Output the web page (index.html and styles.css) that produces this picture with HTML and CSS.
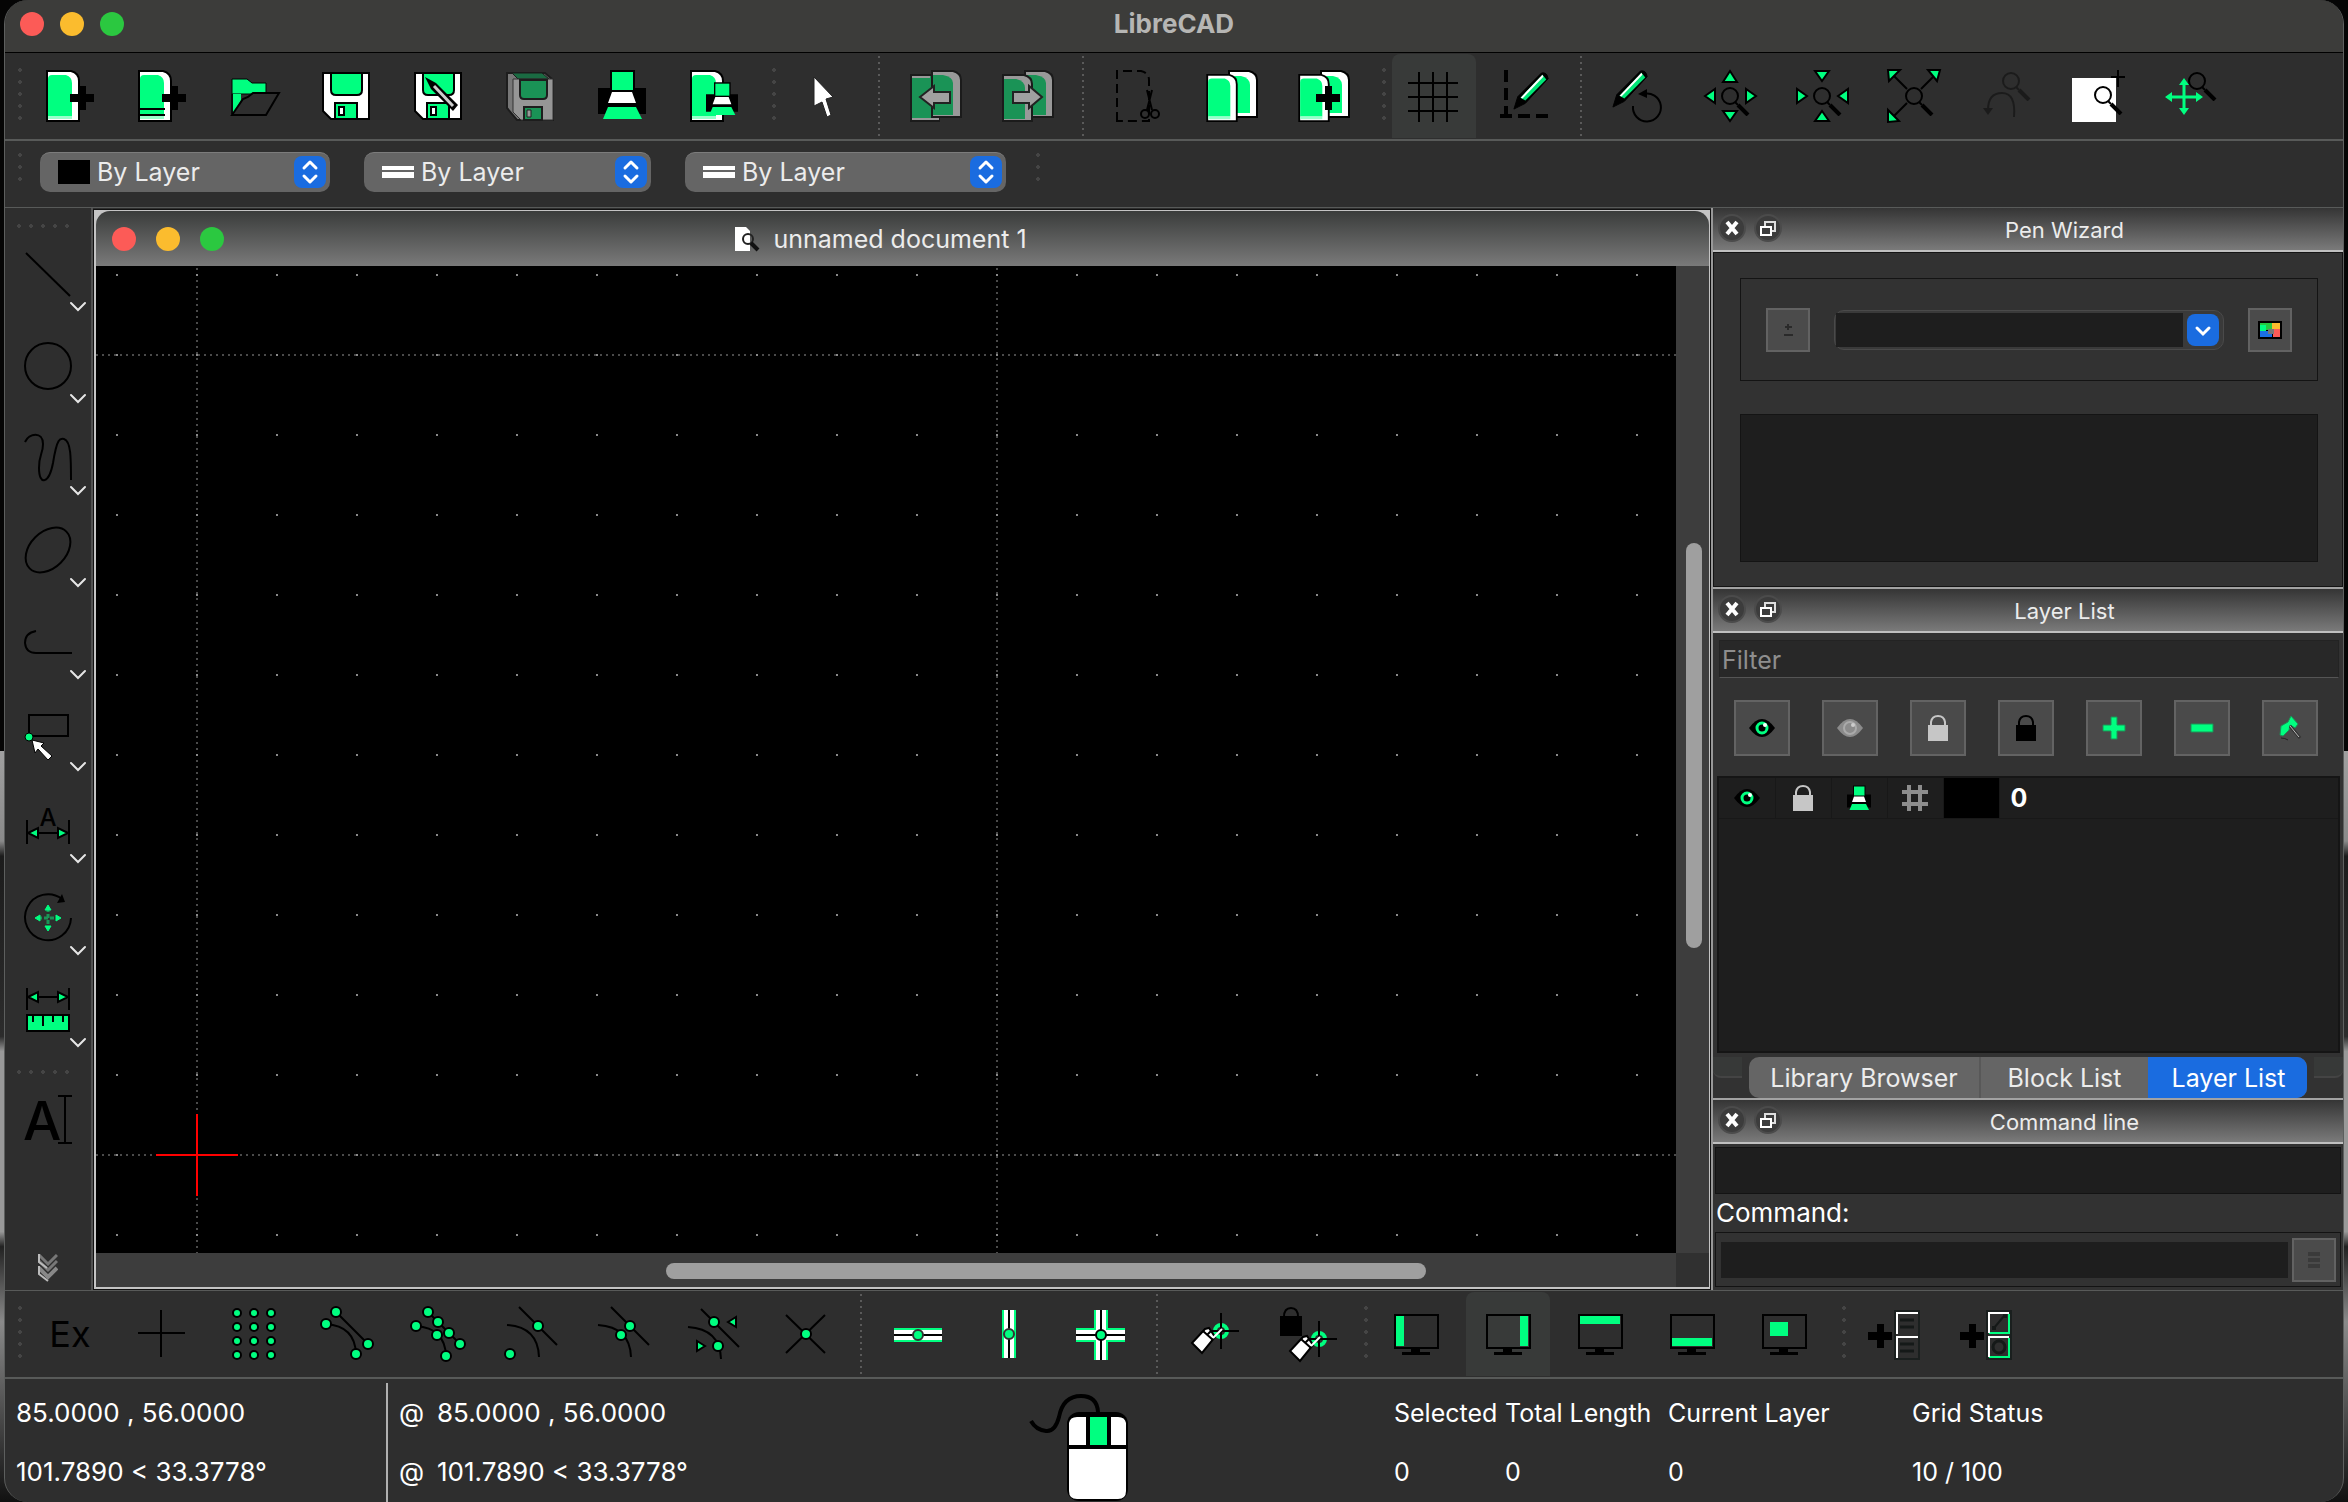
FILE: index.html
```html
<!DOCTYPE html>
<html lang="en">
<head>
<meta charset="utf-8">
<title>LibreCAD</title>
<link rel="stylesheet" href="styles.css">
</head>
<body>
<svg class="defs" aria-hidden="true">
  <defs>
    <symbol id="doc" viewBox="0 0 34 52"><path d="M1 1h24q8 2 8 10v40H1z" fill="#fff" stroke="#000" stroke-width="2"/><path d="M2 9q0-4 4-4h14q6 2 6 8v33H2z" fill="#00ff80"/><path d="M2 46h24v3H2z" fill="#9fc"/></symbol>
    <symbol id="doc-back" viewBox="0 0 30 48"><path d="M1 1h20q8 2 8 9v37H1z" fill="#fff" stroke="#000" stroke-width="2"/><path d="M2 6h11q9 2 9 9v28H2z" fill="#00ff80"/></symbol>
    <symbol id="plus" viewBox="0 0 24 24"><path d="M9 0h7v8h8v8h-8v8H9v-8H0V8h9z"/></symbol>
    <symbol id="printer" viewBox="0 0 48 50"><path d="M0 18h12V0h25v18h11v26H0z"/><path d="M14 2h21v18H14z" fill="#00ff80"/><path d="M14 22h20l4 11H10z" fill="#fff"/><path d="M10 37h28l6 12H5z" fill="#00ff80"/></symbol>
    <symbol id="floppy" viewBox="0 0 48 48"><path d="M1 1h46v46H9l-8-8z" fill="#fff" stroke="#000" stroke-width="2"/><path d="M9 1h31v17q0 5-5 5H14q-5 0-5-5z" fill="#00ff80" stroke="#000" stroke-width="2"/><path d="M13 47V31h22v16z" fill="#00ff80" stroke="#000" stroke-width="2"/><path d="M17 35h5v8h-5z" fill="#fff" stroke="#000" stroke-width="2"/></symbol>
    <symbol id="lens" viewBox="0 0 30 30"><circle cx="9" cy="10" r="8" fill="none" stroke="#000" stroke-width="2"/><path d="M14 16l3 3" stroke="#000" stroke-width="2"/><path d="M17 19l10 10" stroke="#000" stroke-width="4"/></symbol>
    <symbol id="pencil" viewBox="0 0 40 40"><path d="M1 39l4-13L30 1q6-1 7 6L13 33z" stroke="#000" stroke-width="1"/><path d="M8 27L31 3l4 5-22 22z" fill="#00e676"/><path d="M8 27L31 3l1 2L10 28z" fill="#fff"/></symbol>
    <symbol id="monitor" viewBox="0 0 46 42"><path d="M1 1h43v33H1z" fill="none" stroke="#000" stroke-width="2"/><path d="M17 34h9v4h10v3H8v-3h9z"/></symbol>
    <symbol id="eye" viewBox="0 0 26 20"><path d="M0 10Q13-8 26 10 13 28 0 10z"/><circle cx="13" cy="10" r="5" fill="none" stroke="#00ff80" stroke-width="3"/><circle cx="16" cy="7" r="2" fill="#fff"/></symbol>
    <symbol id="eye-off" viewBox="0 0 26 20"><path d="M0 10Q13-8 26 10 13 28 0 10z" fill="#8b8b8b"/><circle cx="13" cy="10" r="6" fill="none" stroke="#aaa" stroke-width="2"/><circle cx="16" cy="7" r="2" fill="#ccc"/></symbol>
    <symbol id="lock" viewBox="0 0 22 28"><path d="M4 12V8q1-6 7-6t7 6v4" fill="none" stroke="currentColor" stroke-width="2"/><path d="M1 11h20v16H1z" fill="currentColor"/></symbol>
    <symbol id="crosshair" viewBox="0 0 36 36"><circle cx="18" cy="18" r="6" fill="none" stroke="#00ff80" stroke-width="4"/><path d="M18 0v36M0 18h36" stroke="#000" stroke-width="2"/></symbol>
    <symbol id="brush" viewBox="0 0 36 32"><path d="M2 20L15 6l4-1 6 9-13 16z" fill="#fff" stroke="#000" stroke-width="2"/><path d="M13 8l10 9M17 12l4-4" fill="none" stroke="#000" stroke-width="2"/><path d="M23 15l9-9" fill="none" stroke="#fff" stroke-width="2"/></symbol>
    <symbol id="close" viewBox="0 0 28 28"><circle cx="14" cy="14" r="13" fill="#3c3c3c" stroke="#4b4b4b" stroke-width="2"/><path d="M9 8l10 12M19 8L9 20" stroke="#fff" stroke-width="4"/></symbol>
    <symbol id="float" viewBox="0 0 28 28"><circle cx="14" cy="14" r="13" fill="#3c3c3c" stroke="#4b4b4b" stroke-width="2"/><path d="M11 12V8h10v9h-3" fill="none" stroke="#ddd" stroke-width="2"/><path d="M7 13h10v8H7z" fill="#3c3c3c" stroke="#fff" stroke-width="2"/></symbol>
    <symbol id="updown" viewBox="0 0 32 32"><path d="M10 12l6-6 6 6M10 20l6 6 6-6" fill="none" stroke="#fff" stroke-width="3" stroke-linecap="round" stroke-linejoin="round"/></symbol>
    <symbol id="chev" viewBox="0 0 18 12"><path d="M2 2l7 7 7-7" fill="none" stroke="#e6e6e6" stroke-width="2" stroke-linecap="round"/></symbol>
  </defs>
</svg>

<div class="window">
  <header class="titlebar">
    <div class="lights"><button class="light red" aria-label="Close"></button><button class="light yellow" aria-label="Minimize"></button><button class="light green" aria-label="Zoom"></button></div>
    <h1>LibreCAD</h1>
  </header>

  <div class="toolbar" role="toolbar" aria-label="File and view">
    <span class="handle"></span>
    <div class="group">
      <button class="tool" aria-label="New"><svg viewBox="0 0 56 56"><use href="#doc" x="4" y="2" width="34" height="52"/><use href="#plus" x="28" y="18" width="24" height="24"/></svg></button>
      <button class="tool" aria-label="New from template"><svg viewBox="0 0 56 56"><use href="#doc" x="4" y="2" width="34" height="52"/><path d="M4 41h27M4 47h27" stroke="#000" stroke-width="2"/><use href="#plus" x="28" y="18" width="24" height="24"/></svg></button>
      <button class="tool" aria-label="Open"><svg viewBox="0 0 56 56"><path d="M6 46V11h15l5 4h14v11H6z" fill="#00ff80" stroke="#000"/><path d="M7 46V26h8v6z" fill="#00ff80"/><path d="M6 47L17 31l5-2 5-4h26L40 47z" fill="#2e2e2e" stroke="#000" stroke-width="2"/></svg></button>
      <button class="tool" aria-label="Save"><svg viewBox="0 0 56 56"><use href="#floppy" x="4" y="4" width="48" height="48"/></svg></button>
      <button class="tool" aria-label="Save as"><svg viewBox="0 0 56 56"><use href="#floppy" x="4" y="4" width="48" height="48"/><path d="M15 9l11 6 22 22-5 6-22-22z"/><path d="M24 18l19 20" stroke="#ccc" stroke-width="3"/></svg></button>
      <button class="tool" aria-label="Save all" disabled><svg viewBox="0 0 56 56"><path d="M5 5h38l8 7v40H15L5 40z" fill="#777" stroke="#1d1d1d" stroke-width="2"/><path d="M10 5h30l7 6H16z" fill="#1a6b42" stroke="#1d1d1d"/><path d="M11 11h40v41H19l-8-8z" fill="#969696" stroke="#333"/><path d="M18 12h27v15q0 4-4 4H22q-4 0-4-4z" fill="#1a9356" stroke="#1d1d1d" stroke-width="2"/><path d="M22 52V39h18v13z" fill="#1a9356" stroke="#1d1d1d" stroke-width="2"/><path d="M25 42h4v7h-4z" fill="#999" stroke="#222"/></svg></button>
      <button class="tool" aria-label="Print"><svg viewBox="0 0 56 56"><use href="#printer" x="4" y="2" width="48" height="50"/></svg></button>
      <button class="tool" aria-label="Print preview"><svg viewBox="0 0 56 56"><use href="#doc" x="4" y="2" width="34" height="52"/><use href="#printer" x="20" y="14" width="32" height="34"/></svg></button>
    </div>
    <span class="handle"></span>
    <button class="tool" aria-label="Select"><svg viewBox="0 0 56 56"><path d="M18 9l19 20-7 2 5 16-4 2-5-15-8 4z" fill="#fff" stroke="#222"/></svg></button>
    <span class="sep"></span>
    <div class="group">
      <button class="tool" aria-label="Undo" disabled><svg viewBox="0 0 56 56"><path d="M3 7h28v46H3z" fill="#1a9356" stroke="#1b1b1b" stroke-width="2"/><path d="M4 9h18M4 51h27" stroke="#999" stroke-width="2"/><path d="M24 3h21q8 2 8 9v37H24z" fill="#999" stroke="#1b1b1b" stroke-width="2"/><path d="M25 7h10q10 2 10 8v32H25z" fill="#1a9356"/><path d="M12 29l14-11v6h16v11H26v5z" fill="#a0a0a0" stroke="#222" stroke-width="2"/></svg></button>
      <button class="tool" aria-label="Redo" disabled><svg viewBox="0 0 56 56"><path d="M25 3h20q8 2 8 9v37H25z" fill="#999" stroke="#1b1b1b" stroke-width="2"/><path d="M26 7h10q10 2 10 8v32H26z" fill="#1a9356"/><path d="M3 7h21q8 2 8 9v37H3z" fill="#999" stroke="#1b1b1b" stroke-width="2"/><path d="M4 11h12q9 2 9 9v31H4z" fill="#1a9356"/><path d="M42 29L29 18v6H13v11h16v5z" fill="#a0a0a0" stroke="#222" stroke-width="2"/></svg></button>
    </div>
    <span class="sep"></span>
    <div class="group">
      <button class="tool" aria-label="Cut"><svg viewBox="0 0 56 56" fill="none" stroke="#000" stroke-width="2"><path d="M5 53V3h24q8 2 8 9v41z" stroke-dasharray="9 5"/><path d="M35 22l5 20M40 22l-5 20"/><circle cx="33" cy="46" r="4"/><circle cx="43" cy="46" r="4"/></svg></button>
      <button class="tool" aria-label="Copy"><svg viewBox="0 0 56 56"><use href="#doc-back" x="24" y="2" width="30" height="48"/><use href="#doc" x="2" y="6" width="32" height="48"/></svg></button>
      <button class="tool" aria-label="Paste"><svg viewBox="0 0 56 56"><use href="#doc-back" x="24" y="2" width="30" height="48"/><use href="#doc" x="2" y="6" width="32" height="48"/><use href="#plus" x="20" y="18" width="24" height="24"/></svg></button>
    </div>
    <span class="handle"></span>
    <div class="group">
      <button class="tool active" aria-label="Grid" aria-pressed="true"><svg viewBox="0 0 56 56"><path d="M13 4v50M27 4v50M41 4v50M2 15h50M2 29h50M2 43h50" stroke="#000" stroke-width="2"/></svg></button>
      <button class="tool" aria-label="Draft"><svg viewBox="0 0 56 56"><path d="M8 2v52" stroke="#000" stroke-width="4" stroke-dasharray="12 6"/><path d="M2 48h52" stroke="#000" stroke-width="4" stroke-dasharray="12 6"/><use href="#pencil" x="15" y="4" width="38" height="38"/></svg></button>
    </div>
    <span class="sep"></span>
    <div class="group">
      <button class="tool" aria-label="Redraw"><svg viewBox="0 0 56 56"><use href="#pencil" x="2" y="2" width="38" height="38"/><path d="M23 38a14 14 0 1 0 10-12" fill="none" stroke="#000" stroke-width="2"/><path d="M28 26l9-5v9z"/></svg></button>
      <button class="tool" aria-label="Zoom in"><svg viewBox="0 0 56 56"><use href="#lens" x="19" y="18" width="30" height="30"/><path d="M28 3l7 11H21zM28 53l7-10H21zM3 28l10-7v14zM54 28l-10-7v14z" fill="#00ff80" stroke="#000" stroke-width="2"/></svg></button>
      <button class="tool" aria-label="Zoom out"><svg viewBox="0 0 56 56"><use href="#lens" x="19" y="18" width="30" height="30"/><path d="M28 13l7-10H21zM28 43l7 10H21zM13 28L3 21v14zM44 28l10-7v14z" fill="#00ff80" stroke="#000" stroke-width="2"/></svg></button>
      <button class="tool" aria-label="Auto zoom"><svg viewBox="0 0 56 56"><use href="#lens" x="19" y="18" width="30" height="30"/><path d="M6 6l15 15M50 6L35 21M6 50l15-15" stroke="#000" stroke-width="2"/><path d="M2 2h12L3 13zM54 2H42l9 11zM2 54V42l11 11z" fill="#00ff80" stroke="#000" stroke-width="2"/></svg></button>
      <button class="tool" aria-label="Previous view" disabled><svg class="dim" viewBox="0 0 56 56"><use href="#lens" x="24" y="3" width="30" height="30"/><path d="M10 42q0-17 14-17t12 24" fill="none" stroke="#000" stroke-width="2"/><path d="M5 40h10l-5 7z"/></svg></button>
      <button class="tool" aria-label="Window zoom"><svg viewBox="0 0 56 56"><path d="M2 10h44v44H2z" fill="#fff"/><path d="M48 2v17M41 9h14" stroke="#000" stroke-width="2"/><use href="#lens" x="24" y="17" width="30" height="30"/></svg></button>
      <button class="tool" aria-label="Zoom panning"><svg viewBox="0 0 56 56"><use href="#lens" x="26" y="3" width="30" height="30"/><path d="M22 14v30M7 29h30" stroke="#00ff80" stroke-width="3"/><path d="M22 10l5 7H17zM22 47l5-7H17zM3 29l7-5v10zM41 29l-7-5v10z" fill="#00ff80"/></svg></button>
    </div>
  </div>

  <div class="toolbar pens" role="toolbar" aria-label="Pen">
    <span class="handle"></span>
    <label class="combo"><span class="swatch black"></span><select aria-label="Color"><option>By Layer</option></select><svg class="stepper" viewBox="0 0 32 32"><use href="#updown"/></svg></label>
    <label class="combo"><span class="swatch lines"></span><select aria-label="Line width"><option>By Layer</option></select><svg class="stepper" viewBox="0 0 32 32"><use href="#updown"/></svg></label>
    <label class="combo wide"><span class="swatch lines"></span><select aria-label="Line type"><option>By Layer</option></select><svg class="stepper" viewBox="0 0 32 32"><use href="#updown"/></svg></label>
    <span class="handle last"></span>
  </div>

  <main class="workspace">
    <div class="palette" role="toolbar" aria-label="Drawing tools">
      <span class="handle-h"></span>
      <div class="stack">
        <button class="tool" aria-label="Line"><svg viewBox="0 0 56 56"><path d="M6 7l44 43" stroke="#000" stroke-width="2"/></svg><svg class="more"><use href="#chev"/></svg></button>
        <button class="tool" aria-label="Circle"><svg viewBox="0 0 56 56"><circle cx="28" cy="28" r="23" fill="none" stroke="#000" stroke-width="2"/></svg><svg class="more"><use href="#chev"/></svg></button>
        <button class="tool" aria-label="Curve"><svg viewBox="0 0 56 56"><path d="M5 12C9 3 23 1 23 14C23 24 19 24 19 38C19 56 29 54 33 33C37 8 40 8 44 9C51 11 51 28 51 50" fill="none" stroke="#000" stroke-width="2"/></svg><svg class="more"><use href="#chev"/></svg></button>
        <button class="tool" aria-label="Ellipse"><svg viewBox="0 0 56 56"><ellipse cx="28" cy="28" rx="26" ry="18" transform="rotate(-45 28 28)" fill="none" stroke="#000" stroke-width="2"/></svg><svg class="more"><use href="#chev"/></svg></button>
        <button class="tool" aria-label="Polyline"><svg viewBox="0 0 56 56"><path d="M16 17q-11 2-11 12 1 10 11 10h36" fill="none" stroke="#000" stroke-width="2"/></svg><svg class="more"><use href="#chev"/></svg></button>
        <button class="tool" aria-label="Select"><svg viewBox="0 0 56 56"><path d="M9 9h39v21H9z" fill="none" stroke="#000" stroke-width="2"/><circle cx="9" cy="31" r="4" fill="#00ff80" stroke="#000"/><path d="M12 34l12 3-3 3 11 10-4 4-10-11-3 4z" fill="#fff" stroke="#000"/></svg><svg class="more"><use href="#chev"/></svg></button>
        <button class="tool" aria-label="Dimension"><svg viewBox="0 0 56 56"><text x="28" y="28" text-anchor="middle" class="glyph small">A</text><path d="M7 22v24M49 22v24M7 35h42" stroke="#000" stroke-width="2"/><path d="M8 35l10-5v10zM48 35l-10-5v10z" fill="#00ff80" stroke="#000" stroke-width="2"/></svg><svg class="more"><use href="#chev"/></svg></button>
        <button class="tool" aria-label="Modify"><svg viewBox="0 0 56 56"><path d="M42 9A23 23 0 1 0 51 28" fill="none" stroke="#000" stroke-width="2"/><path d="M42 4l3 8-8 1z"/><path d="M28 18v20M18 28h20" stroke="#1a9356" stroke-width="3" stroke-dasharray="4 2"/><path d="M25 20l3-5 3 5zM25 36l3 5 3-5zM20 25l-5 3 5 3zM36 25l5 3-5 3z" fill="#00ff80" stroke="#00ff80"/></svg><svg class="more"><use href="#chev"/></svg></button>
        <button class="tool" aria-label="Measure"><svg viewBox="0 0 56 56"><path d="M7 6v22M49 6v22M7 15h42" stroke="#000" stroke-width="2"/><path d="M8 15l10-5v10zM48 15l-10-5v10z" fill="#00ff80" stroke="#000" stroke-width="2"/><path d="M7 33h42v16H7z" fill="#00ff80" stroke="#000" stroke-width="2"/><path d="M13 34v6M23 34v10M33 34v6M43 34v6" stroke="#000" stroke-width="2"/></svg><svg class="more"><use href="#chev"/></svg></button>
      </div>
      <span class="handle-h second"></span>
      <button class="tool" aria-label="Text"><svg viewBox="0 0 56 56"><text x="3" y="48" class="glyph large">A</text><path d="M45 4v47M38 4h14M38 51h14" stroke="#000" stroke-width="2"/></svg></button>
      <button class="overflow" aria-label="More tools"><svg viewBox="0 0 20 28"><path d="M1 1l9 9 9-9M1 7l9 9 9-9" fill="none" stroke="#777" stroke-width="3"/><path d="M1 14l9 9 9-9" fill="none" stroke="#888" stroke-width="4"/><path d="M1 0v8l8 6M1 12v8l9 7" fill="none" stroke="#bbb" stroke-width="2"/></svg></button>
    </div>

    <section class="document">
      <header class="doc-title">
        <div class="lights"><button class="light red" aria-label="Close document"></button><button class="light yellow" aria-label="Minimize document"></button><button class="light green" aria-label="Zoom document"></button></div>
        <h2><svg viewBox="0 0 26 26"><path d="M1 1h11l4 4v20H1z" fill="#fff"/><circle cx="14" cy="13" r="5" fill="none" stroke="#222" stroke-width="2"/><path d="M17 17l7 7" stroke="#111" stroke-width="4"/></svg>unnamed document 1</h2>
      </header>
      <div class="view">
        <svg class="canvas" role="img" aria-label="Drawing area">
          <defs>
            <pattern id="points" width="80" height="80" x="20" y="8" patternUnits="userSpaceOnUse"><path d="M0 0h2v2H0z" fill="#8a8a8a"/></pattern>
            <pattern id="vdash" width="800" height="6" x="100" y="2" patternUnits="userSpaceOnUse"><path d="M0 0h2v2H0z" fill="#4a4a4a"/></pattern>
            <pattern id="hdash" width="6" height="800" x="0" y="88" patternUnits="userSpaceOnUse"><path d="M0 0h2v2H0z" fill="#4a4a4a"/></pattern>
          </defs>
          <rect width="100%" height="100%" fill="url(#vdash)"/>
          <rect width="100%" height="100%" fill="url(#hdash)"/>
          <rect width="100%" height="100%" fill="url(#points)"/>
          <path d="M60 889h82M101 848v82" stroke="#f00" stroke-width="2"/>
        </svg>
        <div class="vscroll"><i></i></div>
        <div class="hscroll"><i></i></div>
      </div>
    </section>

    <aside class="docks">
      <section class="dock">
        <header class="dock-title"><button aria-label="Close Pen Wizard"><svg><use href="#close"/></svg></button><button aria-label="Float Pen Wizard"><svg><use href="#float"/></svg></button><h3>Pen Wizard</h3></header>
        <div class="wizard">
          <div class="wizard-row">
            <button class="small-btn" aria-label="Add color" disabled><svg viewBox="0 0 12 14"><path d="M6 1v6M3 4h7M2 12h9" stroke="#2a2a2a" stroke-width="2"/></svg></button>
            <div class="color-combo"><input type="text" aria-label="Favorite color"><button aria-label="Open colors"><svg viewBox="0 0 32 32"><path d="M10 14l6 6 6-6" fill="none" stroke="#fff" stroke-width="3" stroke-linecap="round"/></svg></button></div>
            <button class="small-btn" aria-label="Pick color"><svg class="palette-icon" viewBox="0 0 24 18"><path d="M0 0h24v18H0z"/><path d="M2 2h12v7H2z" fill="#28c840"/><path d="M2 4h6v6H2z" fill="#00ff80"/><path d="M14 2h8v6h-8z" fill="#fbbc2e"/><path d="M2 10h12v6H2z" fill="#1a6fe4"/><path d="M15 8h7v8h-7z" fill="#fc5b57"/><path d="M10 8h6v5h-6z" fill="#777"/></svg></button>
          </div>
          <div class="wizard-list"></div>
        </div>
      </section>

      <section class="dock grow">
        <header class="dock-title"><button aria-label="Close Layer List"><svg><use href="#close"/></svg></button><button aria-label="Float Layer List"><svg><use href="#float"/></svg></button><h3>Layer List</h3></header>
        <input class="filter" type="text" placeholder="Filter" aria-label="Filter layers">
        <div class="layer-tools">
          <button aria-label="Show all layers"><svg width="26" height="20"><use href="#eye"/></svg></button>
          <button aria-label="Hide all layers"><svg width="26" height="20"><use href="#eye-off"/></svg></button>
          <button class="silver" aria-label="Unlock all layers"><svg width="22" height="28"><use href="#lock"/></svg></button>
          <button aria-label="Lock all layers"><svg width="22" height="28"><use href="#lock"/></svg></button>
          <button aria-label="Add layer"><svg width="24" height="24" viewBox="0 0 24 24"><path d="M9 1h6v8h8v6h-8v8H9v-8H1V9h8z" fill="#00ff80" stroke="#1a9356"/></svg></button>
          <button aria-label="Remove layer"><svg width="24" height="10" viewBox="0 0 24 10"><path d="M1 1h22v8H1z" fill="#00ff80" stroke="#1a9356"/></svg></button>
          <button aria-label="Modify layer"><svg width="24" height="26" viewBox="0 0 24 26"><path d="M2 20l1-9 7-4 3-6 7 8-3 4-5-3-1 5-6 6z" fill="#00ff80" stroke="#1a9356"/><path d="M12 11l10 12" stroke="#333" stroke-width="3"/><path d="M12 11l9 11" stroke="#bbb"/><path d="M3 23q4 0 7 2" stroke="#222" fill="none"/></svg></button>
        </div>
        <div class="layer-list">
          <table>
            <tbody><tr>
              <td><svg width="26" height="20"><use href="#eye"/></svg></td>
              <td class="silver"><svg width="22" height="28"><use href="#lock"/></svg></td>
              <td><svg width="24" height="26"><use href="#printer"/></svg></td>
              <td><svg width="28" height="28" viewBox="0 0 28 28"><path d="M8 1v26M19 1v26M1 8h26M1 20h26" stroke="#8d8d8d" stroke-width="4"/></svg></td>
              <td class="color"></td>
              <th scope="row">0</th>
            </tr></tbody>
          </table>
        </div>
        <div class="tabs"><span class="edge left"></span><div class="tablist" role="tablist"><button role="tab">Library Browser</button><button role="tab">Block List</button><button role="tab" aria-selected="true" class="current">Layer List</button></div><span class="edge right"></span></div>
      </section>

      <section class="dock">
        <header class="dock-title"><button aria-label="Close Command line"><svg><use href="#close"/></svg></button><button aria-label="Float Command line"><svg><use href="#float"/></svg></button><h3>Command line</h3></header>
        <div class="history"></div>
        <label class="prompt" for="command">Command:</label>
        <div class="command"><input id="command" type="text"><button class="small-btn" aria-label="Command options"><svg viewBox="0 0 12 16"><path d="M0 2h12M0 8h12M0 14h12" stroke="#3a3a3a" stroke-width="4"/></svg></button></div>
      </section>
    </aside>
  </main>

  <div class="toolbar snaps" role="toolbar" aria-label="Snapping">
    <span class="handle"></span>
    <div class="group">
      <button class="tool" aria-label="Exclusive snap"><svg viewBox="0 0 56 56"><text x="28" y="41" text-anchor="middle" class="glyph mid">Ex</text></svg></button>
      <button class="tool" aria-label="Free snap"><svg viewBox="0 0 56 56"><path d="M27 4v47M4 27h47" stroke="#000" stroke-width="2"/></svg></button>
      <button class="tool" aria-label="Snap on grid"><svg viewBox="0 0 56 56" fill="#00ff80" stroke="#000" stroke-width="2"><circle cx="11" cy="7" r="4"/><circle cx="28" cy="7" r="4"/><circle cx="45" cy="7" r="4"/><circle cx="11" cy="21" r="4"/><circle cx="28" cy="21" r="4"/><circle cx="45" cy="21" r="4"/><circle cx="11" cy="35" r="4"/><circle cx="28" cy="35" r="4"/><circle cx="45" cy="35" r="4"/><circle cx="11" cy="49" r="4"/><circle cx="28" cy="49" r="4"/><circle cx="45" cy="49" r="4"/></svg></button>
      <button class="tool" aria-label="Snap on endpoints"><svg viewBox="0 0 56 56" fill="#00ff80" stroke="#000" stroke-width="2"><path d="M18 6l32 32M8 18q29 2 30 30" fill="none"/><circle cx="18" cy="6" r="5"/><circle cx="50" cy="38" r="5"/><circle cx="8" cy="18" r="5"/><circle cx="38" cy="48" r="5"/></svg></button>
      <button class="tool" aria-label="Snap on entity"><svg viewBox="0 0 56 56" fill="#00ff80" stroke="#000" stroke-width="2"><path d="M18 6l32 32M6 20q29 2 30 30" fill="none"/><circle cx="18" cy="6" r="5"/><circle cx="28" cy="16" r="5"/><circle cx="39" cy="27" r="5"/><circle cx="50" cy="38" r="5"/><circle cx="6" cy="20" r="5"/><circle cx="27" cy="29" r="5"/><circle cx="36" cy="50" r="5"/></svg></button>
      <button class="tool" aria-label="Snap center"><svg viewBox="0 0 56 56" fill="#00ff80" stroke="#000" stroke-width="2"><path d="M17 1l38 38M5 19q31 2 32 32" fill="none"/><circle cx="36" cy="20" r="5"/><circle cx="8" cy="48" r="5"/></svg></button>
      <button class="tool" aria-label="Snap middle"><svg viewBox="0 0 56 56" fill="#00ff80" stroke="#000" stroke-width="2"><path d="M17 1l38 38M4 19q32 2 33 32" fill="none"/><circle cx="36" cy="20" r="5"/><circle cx="27" cy="29" r="5"/></svg></button>
      <button class="tool" aria-label="Snap distance"><svg viewBox="0 0 56 56" fill="#00ff80" stroke="#000" stroke-width="2"><path d="M15 3l38 38M2 21q32 2 33 32" fill="none"/><circle cx="28" cy="16" r="5"/><circle cx="32" cy="40" r="5"/><path d="M42 16l8-5v10zM19 40l-8-5v10z"/></svg></button>
      <button class="tool" aria-label="Snap intersection"><svg viewBox="0 0 56 56" fill="#00ff80" stroke="#000" stroke-width="2"><path d="M8 9l39 38M47 9L8 47"/><circle cx="28" cy="28" r="5"/></svg></button>
    </div>
    <span class="sep"></span>
    <div class="group">
      <button class="tool" aria-label="Restrict horizontal"><svg viewBox="0 0 56 56"><path d="M4 22h48v14H4z" fill="#00ff80"/><path d="M4 24h48v10H4z" fill="#fff"/><path d="M4 29h48" stroke="#000" stroke-width="2"/><circle cx="28" cy="29" r="5" fill="#00ff80" stroke="#333" stroke-width="2"/></svg></button>
      <button class="tool" aria-label="Restrict vertical"><svg viewBox="0 0 56 56"><path d="M20 4h14v48H20z" fill="#00ff80"/><path d="M22 4h10v48H22z" fill="#fff"/><path d="M27 4v48" stroke="#000" stroke-width="2"/><circle cx="27" cy="28" r="5" fill="#00ff80" stroke="#333" stroke-width="2"/></svg></button>
      <button class="tool" aria-label="Restrict orthogonal"><svg viewBox="0 0 56 56"><path d="M20 4h14v18h17v14H34v18H20V36H2V22h18z" fill="#00ff80"/><path d="M22 4h10v20h19v10H32v20H22V34H2V24h20z" fill="#fff"/><path d="M27 4v50M2 29h49" stroke="#000" stroke-width="2"/><circle cx="27" cy="29" r="5" fill="#00ff80" stroke="#000" stroke-width="2"/></svg></button>
    </div>
    <span class="sep"></span>
    <div class="group">
      <button class="tool" aria-label="Set relative zero"><svg viewBox="0 0 56 56"><use href="#crosshair" x="17" y="7" width="36" height="36"/><use href="#brush" x="4" y="17" width="36" height="32"/></svg></button>
      <button class="tool" aria-label="Lock relative zero"><svg viewBox="0 0 56 56"><path d="M6 11Q6 2 13 2t7 9" fill="none" stroke="#000" stroke-width="2"/><path d="M2 10h22v20H2z"/><use href="#crosshair" x="23" y="15" width="36" height="36"/><use href="#brush" x="10" y="25" width="36" height="32"/></svg></button>
    </div>
    <span class="handle"></span>
    <div class="group">
      <button class="tool" aria-label="Left dock"><svg viewBox="0 0 56 56"><use href="#monitor" x="6" y="8" width="46" height="42"/><path d="M8 10h8v30H8z" fill="#00ff80"/></svg></button>
      <button class="tool active" aria-label="Right dock" aria-pressed="true"><svg viewBox="0 0 56 56"><use href="#monitor" x="6" y="8" width="46" height="42"/><path d="M40 10h8v30h-8z" fill="#00ff80"/></svg></button>
      <button class="tool" aria-label="Top dock"><svg viewBox="0 0 56 56"><use href="#monitor" x="6" y="8" width="46" height="42"/><path d="M8 10h40v8H8z" fill="#00ff80"/></svg></button>
      <button class="tool" aria-label="Bottom dock"><svg viewBox="0 0 56 56"><use href="#monitor" x="6" y="8" width="46" height="42"/><path d="M8 32h40v8H8z" fill="#00ff80"/></svg></button>
      <button class="tool" aria-label="Floating dock"><svg viewBox="0 0 56 56"><use href="#monitor" x="6" y="8" width="46" height="42"/><path d="M14 16h18v14H14z" fill="#00ff80"/></svg></button>
    </div>
    <span class="handle"></span>
    <div class="group">
      <button class="tool" aria-label="Create menu"><svg viewBox="0 0 56 56"><use href="#plus" x="2" y="18" width="24" height="24"/><path d="M29 5h24v48H29z" fill="#2e2e2e" stroke="#1a1f1e" stroke-width="2"/><path d="M31 28V7h21M31 52V31h21" fill="none" stroke="#fff" stroke-width="2"/><path d="M34 14h14M34 21h14M34 38h14M34 45h14" stroke="#151918" stroke-width="3"/></svg></button>
      <button class="tool" aria-label="Create toolbar"><svg viewBox="0 0 56 56"><use href="#plus" x="2" y="18" width="24" height="24"/><path d="M29 5h24v48H29z" fill="#2e2e2e" stroke="#1a1f1e" stroke-width="2"/><path d="M31 27h20V8M31 51h20V32" fill="none" stroke="#00ff80" stroke-width="2"/><path d="M31 27V7h20M31 51V31h20" fill="none" stroke="#fff" stroke-width="2"/><path d="M36 22l10-12" stroke="#151918" stroke-width="2"/><path d="M34 20h4v4h-4zM45 8h4v4h-4z" fill="#151918"/><circle cx="41" cy="41" r="6" fill="none" stroke="#151918" stroke-width="3"/></svg></button>
    </div>
  </div>

  <footer class="status">
    <div class="coords first"><span>85.0000 , 56.0000</span><span>101.7890 &lt; 33.3778°</span></div>
    <div class="coords second"><span>@</span><span>85.0000 , 56.0000</span><span>@</span><span>101.7890 &lt; 33.3778°</span></div>
    <svg class="mouse" viewBox="0 0 104 108" role="img" aria-label="Mouse buttons"><path d="M2 28q5 9 15 10 9 1 13-14Q34 3 52 3q16 0 17 16" fill="none" stroke="#000" stroke-width="4"/><rect x="38" y="19" width="61" height="89" rx="12"/><path d="M40 30q1-6 8-6h9v28H40zM97 30q-1-6-8-6h-7v28h15zM40 56h57v42q0 8-8 8H48q-8 0-8-8z" fill="#fff"/><path d="M61 24h17v28H61z" fill="#00ff80"/></svg>
    <dl class="info">
      <div class="selected"><dt>Selected</dt><dd>0</dd></div>
      <div class="length"><dt>Total Length</dt><dd>0</dd></div>
      <div class="layer"><dt>Current Layer</dt><dd>0</dd></div>
      <div class="grid-status"><dt>Grid Status</dt><dd>10 / 100</dd></div>
    </dl>
  </footer>
</div>
</body>
</html>
```
FILE: styles.css
```css
* { box-sizing: border-box; }

body {
  margin: 0;
  padding: 0 4px;
  min-height: 100vh;
  display: flex;
  background: linear-gradient(#050505 50%, #a0a0a0 50%, #8a8a8a 56%, #1c1c1c 57%, #2c2c2c 69%, #999 70%, #999 82%, #222 83%, #8a8a8a 88%, #111 100%);
  color: #fff;
  font-family: Inter, "Liberation Sans", sans-serif;
  font-size: 25px;
  line-height: 32px;
}

button, input, select {
  margin: 0;
  padding: 0;
  border: 0;
  background: none;
  color: inherit;
  font: inherit;
}

h1, h2, h3, dl, dd { margin: 0; }
svg { display: block; }
.defs { position: absolute; width: 0; height: 0; }

.window {
  flex: 1;
  min-width: 0;
  display: flex;
  flex-direction: column;
  border: solid #5d5f5e;
  border-width: 0 1px;
  border-radius: 24px;
  background: #2e2e2e;
  overflow: hidden;
}

/* Title bars */
.titlebar, .doc-title {
  display: grid;
  grid-template-columns: 1fr auto 1fr;
  align-items: center;
}

.titlebar {
  height: 53px;
  padding: 0 15px 5px;
  border-bottom: 1px solid #000;
  background: #3c3c3a;
}

.titlebar h1 { color: #b6b6b4; font-size: 26px; font-weight: 700; line-height: 32px; }
.lights { display: flex; gap: 16px; }
.light { width: 24px; height: 24px; border-radius: 50%; }
.red { background: #fc5b57; }
.yellow { background: #fbbc2e; }
.green { background: #2bc840; }

/* Toolbars */
.toolbar {
  display: flex;
  align-items: center;
  height: 88px;
  border-bottom: 2px solid #585a59;
}

.group { display: flex; gap: 8px; }

.tool {
  position: relative;
  display: grid;
  place-items: center;
  width: 84px;
  height: 84px;
  border-radius: 8px 8px 0 0;
}

.tool > svg:first-child { width: 56px; height: 56px; overflow: visible; }
.tool.active { background: #383a39; }
.dim { opacity: .4; }

.handle {
  width: 4px;
  height: 52px;
  margin: 0 6px 4px 16px;
  background: radial-gradient(circle, #454545 2px, transparent 2px) 0 0 / 4px 12px;
  background-position: 0 -4px;
}

.handle:first-child { margin-left: 13px; }

.sep {
  width: 2px;
  height: 80px;
  margin: 0 14px 0 12px;
  background: repeating-linear-gradient(#5a5a5a 0 2px, transparent 2px 6px);
}

.glyph { font-family: Inter, sans-serif; fill: #000; }
.glyph.small { font-size: 24px; font-weight: 500; }
.glyph.mid { font-size: 36px; }
.glyph.large { font-size: 54px; font-weight: 500; }

.pens { height: 67px; padding-bottom: 5px; border-bottom-width: 1px; }
.pens .handle { height: 36px; margin-bottom: 2px; }

.combo {
  display: flex;
  align-items: center;
  width: 290px;
  height: 40px;
  margin-left: 34px;
  padding: 0 4px 0 18px;
  border-top: 1px solid #7c7c7c;
  border-radius: 10px;
  background: #656565;
  color: #ececec;
}

.handle + .combo { margin-left: 12px; }
.combo + .combo { width: 287px; }
.combo + .combo.wide { width: 321px; }
.combo select { flex: 1; min-width: 0; padding-left: 7px; appearance: none; outline: 0; }
.swatch { width: 32px; height: 24px; }
.swatch.black { background: #000; }
.swatch.lines { height: 12px; background: linear-gradient(#fff 4px, transparent 4px 6px, #fff 6px); }
.stepper { width: 32px; height: 32px; border-radius: 8px; background: #1a6ce0; }
.pens .handle.last { margin-left: 30px; }

/* Workspace */
.workspace { flex: 1; display: flex; min-height: 0; }

.palette {
  display: flex;
  flex-direction: column;
  width: 88px;
  padding-left: 1px;
  border-right: 2px solid #515151;
}

.handle-h {
  width: 60px;
  height: 4px;
  margin: 16px 0 4px 11px;
  background: radial-gradient(circle, #454545 2px, transparent 2px) 0 0 / 12px 4px;
  background-position: -4px 0;
}

.handle-h.second { margin-top: 18px; }
.stack { display: grid; gap: 8px; }
.more { position: absolute; right: 3px; bottom: 3px; width: 18px; height: 12px; }
.overflow { width: 20px; margin: auto 0 8px 32px; }
.overflow svg { width: 20px; height: 28px; }

.document {
  flex: 1;
  min-width: 0;
  display: flex;
  flex-direction: column;
  margin: 2px 0 1px 1px;
  border: 1px solid #c4c4c4;
  border-width: 1px 1px 2px 2px;
  outline: 1px solid #111;
  background: #c4c4c4;
}

.doc-title {
  height: 55px;
  padding: 0 60px 0 16px;
  border-radius: 14px 14px 0 0;
  background: linear-gradient(#3a3c3b, #7a7a7a);
  color: #ececec;
}

.doc-title .lights { gap: 20px; }
.doc-title h2 { display: flex; align-items: center; gap: 13px; font-size: 25px; font-weight: 400; }
.doc-title h2 svg { width: 26px; height: 26px; }

.view {
  flex: 1;
  min-height: 0;
  display: grid;
  grid-template-columns: 1fr 33px;
  grid-template-rows: 1fr 34px;
  background: #303030;
}

.canvas { width: 100%; height: 100%; background: #000; }
.vscroll, .hscroll { display: grid; background: #3d3d3d; }
.vscroll { padding: 8px 7px 8px 10px; grid-template-rows: 269fr 406fr 297fr; }
.vscroll i { grid-row: 2; }
.hscroll { padding: 10px 8px 8px; grid-template-columns: 562fr 760fr 242fr; }
.hscroll i { grid-column: 2; }
.vscroll i, .hscroll i { border-radius: 8px; background: #9f9f9f; }

/* Docks */
.docks {
  display: flex;
  flex-direction: column;
  width: 632px;
  margin-left: 1px;
  border-left: 2px solid #999;
  background: #323232;
}

.dock { display: flex; flex-direction: column; }
.dock + .dock { border-top: 2px solid #a2a2a2; }
.dock.grow { flex: 1; }

.dock-title {
  display: flex;
  align-items: center;
  gap: 8px;
  height: 44px;
  padding: 0 4px 2px 5px;
  border-bottom: 2px solid #c0c0c0;
  background: linear-gradient(#353535, #7a7a7a);
}

.dock-title svg { width: 28px; height: 28px; }
.dock-title h3 { flex: 1; padding-top: 4px; color: #ececec; font-size: 22px; font-weight: 400; line-height: 28px; text-align: center; }

.wizard {
  display: grid;
  grid-template-columns: minmax(0, 1fr);
  gap: 33px;
  height: 335px;
  padding: 25px 24px 25px 26px;
  border: 1px solid #141414;
}

.wizard-row {
  display: flex;
  align-items: center;
  gap: 24px;
  height: 103px;
  padding: 0 25px;
  border: 1px solid #141414;
}

.wizard-list { height: 148px; border: 1px solid #141414; background: #1e1e1e; }

.small-btn {
  display: grid;
  place-items: center;
  flex: none;
  width: 44px;
  height: 44px;
  border: 2px solid #626262;
  background: #4b4b4b;
}

.small-btn svg { width: 12px; height: 16px; }
.small-btn .palette-icon { width: 24px; height: 18px; }

.color-combo {
  display: flex;
  align-items: center;
  flex: 1;
  min-width: 0;
  gap: 4px;
  height: 40px;
  padding: 0 4px 0 1px;
  border: 1px solid #4a4a4a;
  border-radius: 10px;
  background: #3a3a3a;
}

.color-combo input { flex: 1; min-width: 0; height: 34px; background: #1e1e1e; }
.color-combo button { width: 32px; height: 32px; border-radius: 8px; background: #1a6ce0; }

.filter {
  height: 38px;
  margin: 7px 4px 0 6px;
  padding: 2px 2px 0;
  border: 1px solid #232323;
  border-bottom-color: #555;
  background: #282828;
}

.filter::placeholder { color: #8e8e8e; opacity: 1; }

.layer-tools {
  display: flex;
  justify-content: space-between;
  padding: 22px 25px 20px 21px;
}

.layer-tools button {
  display: grid;
  place-items: center;
  width: 56px;
  height: 56px;
  border: 2px solid #636363;
  background: #4a4a4a;
  color: #000;
}

.layer-tools .silver, .layer-list .silver { color: #c6c6c6; }
.layer-list { flex: 1; margin: 0 3px 0 4px; border: 2px solid #151515; background: #1e1e1e; }
.layer-list table { width: 100%; border-collapse: collapse; table-layout: fixed; }
.layer-list td { width: 56px; height: 40px; padding: 0; border-right: 1px solid #181818; }
.layer-list td svg { margin: 0 auto; }
.layer-list tr { border-bottom: 1px solid #181818; }
.layer-list .color { background: #000; }
.layer-list th { padding: 0 11px; font-weight: 700; text-align: left; }

.tabs { display: flex; justify-content: space-between; height: 45px; padding-top: 4px; }
.edge { width: 29px; height: 21px; border-bottom: 2px solid #444; background: #373938; }
.edge.left { border-radius: 0 0 0 8px; }
.edge.right { border-radius: 0 0 8px 0; }
.tablist { display: grid; grid-template-columns: 230px 169px 159px; height: 41px; border-radius: 10px; background: #656565; overflow: hidden; }
.tablist button { color: #ececec; }
.tablist button + button { border-left: 2px solid #585858; }
.tablist .current { border-color: #1a6ce0; background: #1a6ce0; color: #fff; }

.history { height: 47px; margin: 3px 2px 0; border: 1px solid #131313; background: #1e1e1e; }
.prompt { padding: 5px 3px; font-size: 26px; line-height: 28px; }

.command {
  display: flex;
  align-items: center;
  gap: 4px;
  height: 55px;
  margin: 0 2px 3px;
  padding: 0 4px 0 5px;
  border: 1px solid #131313;
}

.command input { flex: 1; min-width: 0; height: 36px; background: #1e1e1e; }

.snaps { height: 89px; border-top: 1px solid #585a59; }

/* Status bar */
.status { display: flex; min-height: 123px; font-size: 26px; }

.coords { display: grid; grid-template-rows: 59px 59px; align-items: center; margin-top: 4px; }
.coords.first { width: 383px; padding-left: 11px; border-right: 2px solid #b0b0b0; }
.coords.second { grid-template-columns: 38px auto; width: 641px; padding-left: 11px; justify-content: start; }
.mouse { width: 104px; height: 108px; margin: 14px 261px 0 0; }
.info { display: flex; font-size: 25px; }
.info div { display: grid; grid-template-rows: 59px 59px; align-items: center; margin-top: 4px; white-space: nowrap; }
.selected { width: 111px; }
.length { width: 163px; }
.layer { width: 244px; }
```
